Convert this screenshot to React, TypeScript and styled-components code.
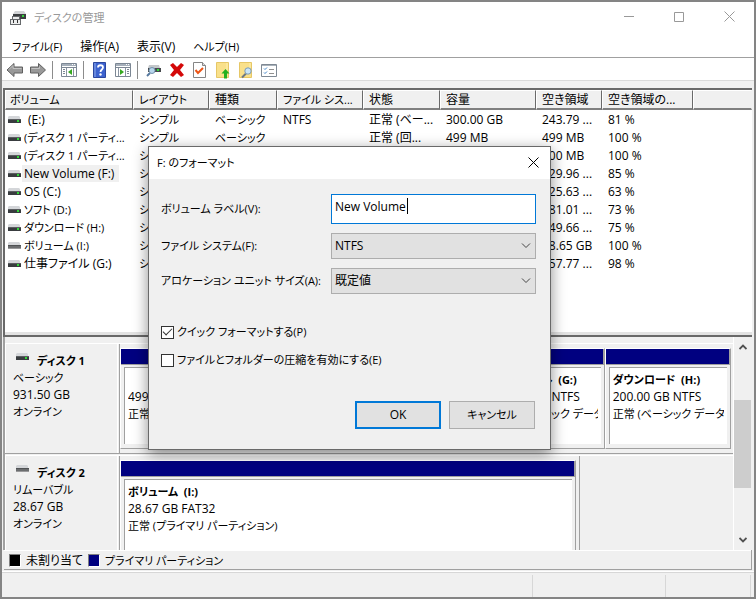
import React, { useState } from "react";
import styled, { createGlobalStyle, css } from "styled-components";

const FACE = "#f0f0f0";
const SHADE = "#a0a0a0";
const DARK = "#696969";
const NAVY = "#000080";

const GlobalStyle = createGlobalStyle`
  *, *::before, *::after { box-sizing: border-box; }
  html, body, #root { height: 100%; margin: 0; }
  body, button, input, select, table {
    font-family: "Open Sans", "Noto Sans CJK JP", sans-serif;
    font-size: 12px;
    line-height: 18px;
    font-feature-settings: "palt";
    color: #000;
  }
  body { overflow: hidden; }
`;

const Window = styled.div`
  position: relative;
  height: 100%;
  display: grid;
  grid-template-rows: 32px 24px 23px minmax(0, 256fr) minmax(0, 213fr) 20px 27px;
  grid-template-columns: minmax(0, 1fr);
  border: 2px solid #848484;
  background: ${FACE};
`;

const TitleBar = styled.header`
  display: flex;
  align-items: center;
  gap: 8px;
  padding-left: 8px;
  background: #fff;
`;

const WindowTitle = styled.h1`
  flex: 1;
  margin: 0;
  font-size: 11px;
  font-weight: 400;
  color: #999;
`;

const CaptionButton = styled.button`
  width: 50px;
  height: 30px;
  padding: 0;
  border: 0;
  background: none;
  color: #999;
`;

const MenuBar = styled.nav`
  display: flex;
  gap: 18px;
  padding: 2px 10px 0;
  background: #fff;
  border-bottom: 1px solid ${SHADE};
`;

const MenuItem = styled.button<{ $compact?: boolean }>`
  padding: 0;
  border: 0;
  background: none;
  font-size: ${(p) => (p.$compact ? 11 : 12)}px;
`;

const ToolBar = styled.div`
  display: flex;
  align-items: center;
  padding: 2px 1px 0;
  background: #fff;
  border-bottom: 1px solid #d9d9d9;
`;

const ToolButton = styled.button`
  display: grid;
  place-items: center;
  width: 23px;
  height: 20px;
  padding: 0;
  border: 0;
  background: none;
`;

const ToolSeparator = styled.span`
  width: 1px;
  height: 18px;
  margin: 0 4px 0 3px;
  background: #8c8c8c;
`;

const ListPane = styled.section`
  margin: 7px 2px 0 1px;
  overflow: hidden;
  border: solid ${DARK};
  border-width: 2px 0 2px 2px;
  background: #fff;
  box-shadow: inset 0 -3px 0 #e3e3e3;
`;

const VolumeTable = styled.table`
  width: 100%;
  table-layout: fixed;
  border-collapse: separate;
  border-spacing: 0;
`;

const Column = styled.col<{ $width?: number }>`
  ${(p) => p.$width && css`width: ${p.$width}px;`}
`;

const HeadCell = styled.th<{ $compact?: boolean }>`
  height: 20px;
  padding: 0 0 0 4px;
  overflow: hidden;
  white-space: nowrap;
  text-align: left;
  font-weight: 400;
  font-size: ${(p) => (p.$compact ? 11 : 12)}px;
  line-height: 16px;
  background: ${FACE};
  border: 1px solid #fff;
  border-right-color: ${DARK};
  border-bottom: 2px solid #808080;
  &:last-child { border-right-color: ${FACE}; }
  & + & { padding-left: 5px; }
`;

const Cell = styled.td<{ $compact?: boolean }>`
  height: 18px;
  padding: 1px 0 0 6px;
  overflow: hidden;
  white-space: nowrap;
  font-size: ${(p) => (p.$compact ? 11 : 12)}px;
  line-height: 17px;
  &:first-child { padding-left: 2px; }
`;

const VolumeName = styled.div`
  display: flex;
  align-items: center;
  gap: 1px;
  svg { flex: none; }
`;

const VolumeText = styled.span<{ $selected?: boolean; $indent?: boolean; $compact?: boolean }>`
  padding: 0 5px 0 ${(p) => (p.$indent ? 6 : 2)}px;
  font-size: ${(p) => (p.$compact ? 11 : 12)}px;
  background: ${(p) => (p.$selected ? FACE : "transparent")};
`;

const DiskPane = styled.section`
  display: flex;
  min-height: 0;
  margin: 0 2px 0 1px;
  border-left: 2px solid ${SHADE};
  overflow: hidden;
`;

const DiskList = styled.div`
  flex: 1;
  min-width: 0;
  display: flex;
  flex-direction: column;
  gap: 1px;
  padding-top: 6px;
  overflow: hidden;
  border-right: 1px solid #fff;
`;

const DiskRow = styled.article`
  flex: none;
  display: flex;
  height: 111px;
  border-top: 1px solid #fff;
  border-bottom: 1px solid ${SHADE};
`;

const DiskLabel = styled.div`
  flex: none;
  width: 113px;
  padding: 8px 0 0 7px;
  line-height: 17px;
  border: solid #fff;
  border-width: 0 1px;
`;

const DiskTitle = styled.h2`
  display: flex;
  gap: 8px;
  margin: 0;
  padding-left: 2px;
  font-size: 11px;
  line-height: 17px;
`;

const DiskLine = styled.div<{ $compact?: boolean }>`
  height: 17px;
  font-size: ${(p) => (p.$compact ? 11 : 12)}px;
`;

const Partitions = styled.div<{ $end?: number }>`
  flex: 1;
  min-width: 0;
  display: flex;
  margin: 0 ${(p) => p.$end ?? 0}px 0 1px;
  padding: 4px ${(p) => (p.$end ? 3 : 2)}px 4px 0;
  border-left: 1px solid ${SHADE};
  ${(p) => p.$end && css`border-right: 1px solid ${SHADE};`}
`;

const Partition = styled.div<{ $share: number }>`
  flex: ${(p) => p.$share} 1 0;
  min-width: 0;
  display: flex;
  flex-direction: column;
  border: 1px solid #fff;
  border-right-color: ${SHADE};
  border-bottom-color: ${SHADE};
`;

const Stripe = styled.div`
  height: 16px;
  background: ${NAVY};
  border-right: 1px solid ${SHADE};
  border-bottom: 1px solid ${SHADE};
`;

const PartitionBody = styled.div`
  flex: 1;
  min-height: 0;
  margin: 2px 3px 4px;
  padding: 3px;
  overflow: hidden;
  white-space: nowrap;
  line-height: 17px;
  background: #fff;
  border: solid ${SHADE};
  border-width: 1px 0 0 1px;
`;

const PartitionLine = styled.div<{ $strong?: boolean; $compact?: boolean }>`
  height: 17px;
  overflow: hidden;
  white-space: pre;
  font-size: ${(p) => (p.$compact ? 11 : 12)}px;
  font-weight: ${(p) => (p.$strong ? 700 : 400)};
`;

const ScrollBar = styled.div`
  flex: none;
  width: 18px;
  display: flex;
  flex-direction: column;
`;

const ScrollArrow = styled.button`
  flex: none;
  display: grid;
  place-items: center;
  height: 20px;
  padding: 0;
  border: 0;
  background: none;
`;

const ScrollTrack = styled.div`
  flex: 1;
  display: flex;
  flex-direction: column;
  justify-content: flex-end;
  padding: 0 1px 42px 0;
`;

const ScrollThumb = styled.div`
  height: 88px;
  background: #cdcdcd;
`;

const Legend = styled.footer`
  display: flex;
  align-items: center;
  gap: 5px;
  margin: 0 2px;
  padding: 3px 0 0 5px;
  border: solid ${SHADE};
  border-width: 0 1px 1px 0;
  box-shadow: inset 0 1px 0 #fff;
`;

const LegendText = styled.span<{ $compact?: boolean }>`
  font-size: ${(p) => (p.$compact ? 11 : 12)}px;
`;

const Swatch = styled.span<{ $color: string }>`
  width: 12px;
  height: 13px;
  margin-bottom: 1px;
  background: ${(p) => p.$color};
  border: 1px solid #808080;
  border-right-color: #fff;
  border-bottom-color: #fff;
`;

const StatusBar = styled.div`
  display: grid;
  grid-template-columns: 1fr 133px 85px 3px;
  margin-top: 2px;
  padding-top: 2px;
  border-top: 1px solid #d7d7d7;
  box-shadow: 0 -1px 0 #fff;
`;

const StatusField = styled.span`
  border-right: 1px solid #d7d7d7;
`;

const Dialog = styled.form`
  position: absolute;
  left: 146px;
  top: 144px;
  width: 403px;
  background: ${FACE};
  border: 1px solid ${DARK};
  box-shadow: 0 4px 14px rgba(0, 0, 0, 0.45);
`;

const DialogTitleBar = styled.div`
  display: flex;
  align-items: center;
  justify-content: space-between;
  height: 32px;
  padding-left: 8px;
  background: #fff;
`;

const DialogTitle = styled.h2`
  margin: 0;
  font-size: 11px;
  font-weight: 400;
`;

const CloseButton = styled.button`
  display: grid;
  place-items: center;
  width: 34px;
  height: 28px;
  padding: 0 0 2px;
  border: 0;
  background: none;
`;

const Fields = styled.div`
  display: grid;
  grid-template-columns: 170px minmax(0, 1fr);
  grid-template-rows: 30px 26px 26px;
  row-gap: 9px;
  align-items: center;
  padding: 15px 14px 0 12px;
`;

const FieldLabel = styled.label`
  justify-self: start;
  font-size: 11px;
  white-space: nowrap;
`;

const TextBoxWrap = styled.div`
  position: relative;
  height: 30px;
`;

const TextBox = styled.input`
  width: 100%;
  height: 30px;
  padding: 0 3px 5px;
  background: #fff;
  border: 1px solid #0078d7;
  border-radius: 0;
  outline: none;
  caret-color: transparent;
`;

const Caret = styled.span`
  position: absolute;
  left: 76px;
  top: 4px;
  width: 1px;
  height: 16px;
  background: #000;
`;

const SelectWrap = styled.div`
  display: grid;
  align-items: center;
  > * { grid-area: 1 / 1; }
  > svg { justify-self: end; margin-right: 5px; pointer-events: none; }
`;

const Select = styled.select`
  appearance: none;
  width: 100%;
  height: 26px;
  padding: 0 24px 0 3px;
  background: #e1e1e1;
  border: 1px solid #adadad;
  border-radius: 0;
`;

const Options = styled.div`
  display: grid;
  gap: 10px;
  padding: 29px 12px 0;
`;

const CheckLabel = styled.label`
  display: flex;
  align-items: center;
  gap: 3px;
  font-size: 11px;
`;

const CheckBox = styled.input`
  appearance: none;
  flex: none;
  width: 13px;
  height: 13px;
  margin: 0;
  background: #fff;
  border: 1px solid #333;
  display: grid;
  place-items: center;
  &:checked::before {
    content: "";
    width: 9px;
    height: 5px;
    margin-top: -3px;
    border: solid #333;
    border-width: 0 0 1px 1px;
    transform: rotate(-45deg);
  }
`;

const Actions = styled.div`
  display: flex;
  justify-content: flex-end;
  gap: 8px;
  padding: 32px 15px 20px;
`;

const DialogButton = styled.button<{ $primary?: boolean }>`
  width: 86px;
  height: 28px;
  padding: 0;
  background: #e1e1e1;
  font-size: ${(p) => (p.$primary ? 12 : 11)}px;
  border: ${(p) => (p.$primary ? "2px solid #0078d7" : "1px solid #adadad")};
`;

const DriveIcon = ({ removable = false }: { removable?: boolean }) => (
  <svg width="14" height="10" viewBox="0 0 14 10" aria-hidden="true">
    <path d="M2 1h10l1 1v2H1V2z" fill="#d4d6d9" />
    <rect x="1" y="4" width="13" height="4" fill={removable ? "#6b6d6f" : "#393c3f"} />
    <rect x="1" y="4" width="13" height="1" fill={removable ? "#505254" : "#5a5d60"} />
    {removable && <rect x="1" y="7" width="13" height="1" fill="#99999b" />}
    {!removable && <rect x="10" y="5" width="2" height="2" fill="#30d838" />}
  </svg>
);

const AppIcon = () => (
  <svg width="16" height="16" viewBox="0 0 16 16" aria-hidden="true">
    <path d="M5 1h9l2 3H3z" fill="#d2d4d6" />
    <path d="M3 4h13v5H3z" fill="#3b3e40" />
    <path d="M12 5h2v2h-2z" fill="#35d53c" />
    <path d="M2 6h8v3h1v6H0V9h2z" fill="#66696c" />
    <path d="M3 7h6v2H3zM1 10h9v4H1z" fill="#eceded" />
    <path d="M3 10h1v3H3zM7 10h1v3H7z" fill="#333" />
  </svg>
);

const ArrowIcon = ({ right = false }: { right?: boolean }) => (
  <svg width="18" height="16" viewBox="0 0 18 16" aria-hidden="true">
    <path
      d={right ? "M16.500 8L9.500 1.500V5h-8v6h8v3.500z" : "M1 8l7-6.500V5h8.500v6H8v3.500z"}
      fill="#999"
      stroke="#606060"
      strokeLinejoin="round"
    />
    <path d={right ? "M2.500 6.500h8V4.500" : "M3 7.500l4-4V6.500h8.500"} fill="none" stroke="#c2c2c2" />
  </svg>
);

const PanelIcon = ({ right = false }: { right?: boolean }) => (
  <svg width="16" height="14" viewBox="0 0 16 14" aria-hidden="true">
    <path d="M.5.5h15v13H.5z" fill="#fff" stroke="#7c8794" />
    <path d="M1 1h14v2H1z" fill="#a5afba" />
    <path d="M11 1.500h1M13 1.500h1" stroke="#fff" />
    <path d="M1 4.500h14" stroke="#7c8794" />
    {right ? (
      <>
        <path d="M10.500 5v8M3.500 5v8" stroke="#8a95a2" />
        <path d="M12 6.500h2M12 8.500h2M12 10.500h2" stroke="#7c8794" />
        <path d="M5 6l4 3-4 3z" fill="#36a820" />
      </>
    ) : (
      <>
        <path d="M5.500 5v8M12.500 5v8" stroke="#8a95a2" />
        <path d="M2 6.500h2M2 8.500h2M2 10.500h2" stroke="#7c8794" />
        <path d="M11 6l-4 3 4 3z" fill="#36a820" />
      </>
    )}
  </svg>
);

const HelpIcon = () => (
  <svg width="14" height="16" viewBox="0 0 14 16" aria-hidden="true">
    <path d="M.5.5h12v15H.5z" fill="#3d63cf" stroke="#2c479e" />
    <path d="M1 1h2v14H1z" fill="#6788dd" />
    <path d="M5 5.500C5 2.500 10 2.500 10 5.500 10 7.500 7.500 7.500 7.500 10" fill="none" stroke="#fff" strokeWidth="1.800" />
    <circle cx="7.500" cy="12.500" r="1.200" fill="#fff" />
  </svg>
);

const DriveSearchIcon = () => (
  <svg width="17" height="16" viewBox="0 0 17 16" aria-hidden="true">
    <path d="M4 3h10l1 3H3z" fill="#c4c7ca" />
    <path d="M3 6h13v4H3z" fill="#45494c" />
    <path d="M12 7h2v2h-2z" fill="#34df3c" />
    <path d="M5 11l-3 3" stroke="#56789e" strokeWidth="2" />
    <circle cx="7" cy="8.500" r="3" fill="#b9d7ee" stroke="#7592ac" />
  </svg>
);

const DeleteIcon = () => (
  <svg width="16" height="16" viewBox="0 0 16 16" aria-hidden="true">
    <path d="M1 3l3-2 4 4 4-4 3 2-4 5 4 5-3 2-4-4-4 4-3-2 4-5z" fill="#d40808" />
  </svg>
);

const CheckDocIcon = () => (
  <svg width="13" height="16" viewBox="0 0 13 16" aria-hidden="true">
    <path d="M.5.5h9l3 3v12H.5z" fill="#fff" stroke="#858585" />
    <path d="M9.500.5v3h3" fill="#ddd" stroke="#858585" />
    <path d="M2.500 8l2.500 3 5-5" fill="none" stroke="#ed5516" strokeWidth="2" />
  </svg>
);

const FolderIcon = ({ search = false }: { search?: boolean }) => (
  <svg width="15" height="17" viewBox="0 0 15 17" aria-hidden="true">
    <path d="M1.500.5h12v15h-12z" fill="#f9e08a" stroke="#e6c766" />
    <path d="M12 1v7" stroke="#fff0ae" />
    {search ? (
      <>
        <path d="M8 11.500l-4 4" stroke="#6c7884" strokeWidth="2" />
        <circle cx="10" cy="9" r="3.200" fill="#cae5f7" stroke="#7b9bb5" />
      </>
    ) : (
      <path d="M10.500 7l4 4.500h-2.500v5H9v-5H6.500z" fill="#22b020" />
    )}
  </svg>
);

const ChecklistIcon = () => (
  <svg width="16" height="13" viewBox="0 0 16 13" aria-hidden="true">
    <path d="M.5.5h15v12H.5z" fill="#fff" stroke="#7f8994" />
    <path d="M1 1.500h14" stroke="#a8b1ba" />
    <path d="M3 4.500l1 1 2-2M3 8.500l1 1 2-2" fill="none" stroke="#3d83c9" />
    <path d="M8 5.500h5M8 9.500h5" stroke="#909090" />
  </svg>
);

const Glyph = ({ d, size = 10, height = size }: { d: string; size?: number; height?: number }) => (
  <svg width={size} height={height} viewBox={`0 0 ${size} ${height}`} aria-hidden="true">
    <path d={d} fill="none" stroke="currentColor" />
  </svg>
);

const Chevron = () => (
  <svg width="10" height="6" viewBox="0 0 10 6" aria-hidden="true">
    <path d="M1 .5l4 4 4-4" fill="none" stroke="#444" />
  </svg>
);

const ScrollGlyph = ({ down = false }: { down?: boolean }) => (
  <svg width="8" height="6" viewBox="0 0 8 6" aria-hidden="true">
    <path d={down ? "M.5 1L4 4.500 7.500 1" : "M.5 5L4 1.500 7.500 5"} fill="none" stroke="#505050" strokeWidth="1.800" />
  </svg>
);

const isKana = (text: string) => /^\(?[ァ-ヶ]/.test(text);

const menus = ["ファイル(F)", "操作(A)", "表示(V)", "ヘルプ(H)"];

const tools: ({ label: string; icon: React.ReactNode } | null)[] = [
  { label: "戻る", icon: <ArrowIcon /> },
  { label: "進む", icon: <ArrowIcon right /> },
  null,
  { label: "コンソール ツリー", icon: <PanelIcon /> },
  null,
  { label: "ヘルプ", icon: <HelpIcon /> },
  { label: "操作ウィンドウ", icon: <PanelIcon right /> },
  null,
  { label: "再スキャン", icon: <DriveSearchIcon /> },
  { label: "削除", icon: <DeleteIcon /> },
  { label: "プロパティ", icon: <CheckDocIcon /> },
  { label: "開く", icon: <FolderIcon /> },
  { label: "エクスプローラー", icon: <FolderIcon search /> },
  { label: "設定", icon: <ChecklistIcon /> },
];

const columns: { title: string; width?: number }[] = [
  { title: "ボリューム", width: 128 },
  { title: "レイアウト", width: 76 },
  { title: "種類", width: 68 },
  { title: "ファイル シス...", width: 86 },
  { title: "状態", width: 77 },
  { title: "容量", width: 96 },
  { title: "空き領域", width: 66 },
  { title: "空き領域の...", width: 91 },
  { title: "" },
];

interface Volume {
  name: string;
  fs: string;
  status: string;
  size: string;
  free: string;
  percent: string;
  selected?: boolean;
  removable?: boolean;
  indent?: boolean;
}

const volumes: Volume[] = [
  { name: "(E:)", fs: "NTFS", status: "正常 (ベー...", size: "300.00 GB", free: "243.79 ...", percent: "81 %", indent: true },
  { name: "(ディスク 1 パーティ...", fs: "", status: "正常 (回...", size: "499 MB", free: "499 MB", percent: "100 %" },
  { name: "(ディスク 1 パーティ...", fs: "", status: "正常 (EFI...", size: "100 MB", free: "100 MB", percent: "100 %" },
  { name: "New Volume (F:)", fs: "NTFS", status: "正常 (ベー...", size: "270.00 GB", free: "229.96 ...", percent: "85 %", selected: true },
  { name: "OS (C:)", fs: "NTFS", status: "正常 (ブー...", size: "200.00 GB", free: "125.63 ...", percent: "63 %" },
  { name: "ソフト (D:)", fs: "NTFS", status: "正常 (ベー...", size: "250.00 GB", free: "181.01 ...", percent: "73 %" },
  { name: "ダウンロード (H:)", fs: "NTFS", status: "正常 (ベー...", size: "200.00 GB", free: "149.66 ...", percent: "75 %" },
  { name: "ボリューム (I:)", fs: "FAT32", status: "正常 (プラ...", size: "28.65 GB", free: "28.65 GB", percent: "100 %", removable: true },
  { name: "仕事ファイル (G:)", fs: "NTFS", status: "正常 (ベー...", size: "161.00 GB", free: "157.77 ...", percent: "98 %" },
];

interface Disk {
  title: string;
  kind: string;
  size: string;
  removable?: boolean;
  end?: number;
  partitions: { share: number; title: string; size: string; status: string }[];
}

const disks: Disk[] = [
  {
    title: "ディスク 1",
    kind: "ベーシック",
    size: "931.50 GB",
    partitions: [
      { share: 80, title: "", size: "499 MB", status: "正常 (回復)" },
      { share: 284, title: "New Volume  (F:)", size: "270.00 GB NTFS", status: "正常 (ベーシック データ パーティション)" },
      { share: 121, title: "仕事ファイル  (G:)", size: "161.00 GB NTFS", status: "正常 (ベーシック データ パーティション)" },
      { share: 126, title: "ダウンロード  (H:)", size: "200.00 GB NTFS", status: "正常 (ベーシック データ パーティション)" },
    ],
  },
  {
    title: "ディスク 2",
    kind: "リムーバブル",
    size: "28.67 GB",
    removable: true,
    end: 153,
    partitions: [{ share: 1, title: "ボリューム  (I:)", size: "28.67 GB FAT32", status: "正常 (プライマリ パーティション)" }],
  },
];

function FormatDialog() {
  const [label, setLabel] = useState("New Volume");
  const [quick, setQuick] = useState(true);
  const [compress, setCompress] = useState(false);
  return (
    <Dialog role="dialog" aria-labelledby="format-title" onSubmit={(e) => e.preventDefault()}>
      <DialogTitleBar>
        <DialogTitle id="format-title">F: のフォーマット</DialogTitle>
        <CloseButton type="button" aria-label="閉じる">
          <Glyph d="M.5.5l10 10M10.500.5l-10 10" size={11} />
        </CloseButton>
      </DialogTitleBar>
      <Fields>
        <FieldLabel htmlFor="volume-label">ボリューム ラベル(V):</FieldLabel>
        <TextBoxWrap>
          <TextBox id="volume-label" value={label} onChange={(e) => setLabel(e.target.value)} />
          <Caret />
        </TextBoxWrap>
        <FieldLabel htmlFor="file-system">ファイル システム(F):</FieldLabel>
        <SelectWrap>
          <Select id="file-system" defaultValue="NTFS">
            <option>NTFS</option>
          </Select>
          <Chevron />
        </SelectWrap>
        <FieldLabel htmlFor="unit-size">アロケーション ユニット サイズ(A):</FieldLabel>
        <SelectWrap>
          <Select id="unit-size" defaultValue="既定値">
            <option>既定値</option>
          </Select>
          <Chevron />
        </SelectWrap>
      </Fields>
      <Options>
        <CheckLabel>
          <CheckBox type="checkbox" checked={quick} onChange={(e) => setQuick(e.target.checked)} />
          クイック フォーマットする(P)
        </CheckLabel>
        <CheckLabel>
          <CheckBox type="checkbox" checked={compress} onChange={(e) => setCompress(e.target.checked)} />
          ファイルとフォルダーの圧縮を有効にする(E)
        </CheckLabel>
      </Options>
      <Actions>
        <DialogButton $primary type="submit">OK</DialogButton>
        <DialogButton type="button">キャンセル</DialogButton>
      </Actions>
    </Dialog>
  );
}

export default function App() {
  return (
    <>
      <GlobalStyle />
      <Window>
        <TitleBar>
          <AppIcon />
          <WindowTitle>ディスクの管理</WindowTitle>
          <div>
            <CaptionButton aria-label="最小化"><Glyph d="M0 5.500h10" size={11} /></CaptionButton>
            <CaptionButton aria-label="最大化"><Glyph d="M.5.5h9v9h-9z" /></CaptionButton>
            <CaptionButton aria-label="閉じる"><Glyph d="M.5.5l10 10M10.500.5l-10 10" size={11} /></CaptionButton>
          </div>
        </TitleBar>
        <MenuBar>
          {menus.map((m) => (
            <MenuItem key={m} $compact={isKana(m)}>{m}</MenuItem>
          ))}
        </MenuBar>
        <ToolBar role="toolbar">
          {tools.map((t, i) =>
            t ? (
              <ToolButton key={i} aria-label={t.label}>{t.icon}</ToolButton>
            ) : (
              <ToolSeparator key={i} />
            )
          )}
        </ToolBar>
        <ListPane>
          <VolumeTable>
            <colgroup>
              {columns.map((c, i) => (
                <Column key={i} $width={c.width} />
              ))}
            </colgroup>
            <thead>
              <tr>
                {columns.map((c, i) => (
                  <HeadCell key={i} scope="col" $compact={isKana(c.title)}>{c.title}</HeadCell>
                ))}
              </tr>
            </thead>
            <tbody>
              {volumes.map((v, i) => (
                <tr key={i}>
                  <Cell>
                    <VolumeName>
                      <DriveIcon removable={v.removable} />
                      <VolumeText $selected={v.selected} $indent={v.indent} $compact={isKana(v.name)}>
                        {v.name}
                      </VolumeText>
                    </VolumeName>
                  </Cell>
                  <Cell $compact>シンプル</Cell>
                  <Cell $compact>ベーシック</Cell>
                  <Cell>{v.fs}</Cell>
                  <Cell>{v.status}</Cell>
                  <Cell>{v.size}</Cell>
                  <Cell>{v.free}</Cell>
                  <Cell>{v.percent}</Cell>
                  <Cell />
                </tr>
              ))}
            </tbody>
          </VolumeTable>
        </ListPane>
        <DiskPane>
          <DiskList>
            {disks.map((d) => (
              <DiskRow key={d.title}>
                <DiskLabel>
                  <DiskTitle>
                    <DriveIcon removable={d.removable} />
                    {d.title}
                  </DiskTitle>
                  <DiskLine $compact>{d.kind}</DiskLine>
                  <DiskLine>{d.size}</DiskLine>
                  <DiskLine $compact>オンライン</DiskLine>
                </DiskLabel>
                <Partitions $end={d.end}>
                  {d.partitions.map((p, i) => (
                    <Partition key={i} $share={p.share}>
                      <Stripe />
                      <PartitionBody>
                        <PartitionLine $strong $compact>{p.title}</PartitionLine>
                        <PartitionLine>{p.size}</PartitionLine>
                        <PartitionLine $compact>{p.status}</PartitionLine>
                      </PartitionBody>
                    </Partition>
                  ))}
                </Partitions>
              </DiskRow>
            ))}
          </DiskList>
          <ScrollBar>
            <ScrollArrow aria-label="上へ"><ScrollGlyph /></ScrollArrow>
            <ScrollTrack><ScrollThumb /></ScrollTrack>
            <ScrollArrow aria-label="下へ"><ScrollGlyph down /></ScrollArrow>
          </ScrollBar>
        </DiskPane>
        <Legend>
          <Swatch $color="#000" />
          <LegendText>未割り当て</LegendText>
          <Swatch $color={NAVY} />
          <LegendText $compact>プライマリ パーティション</LegendText>
        </Legend>
        <StatusBar>
          <StatusField />
          <StatusField />
          <StatusField />
        </StatusBar>
        <FormatDialog />
      </Window>
    </>
  );
}
